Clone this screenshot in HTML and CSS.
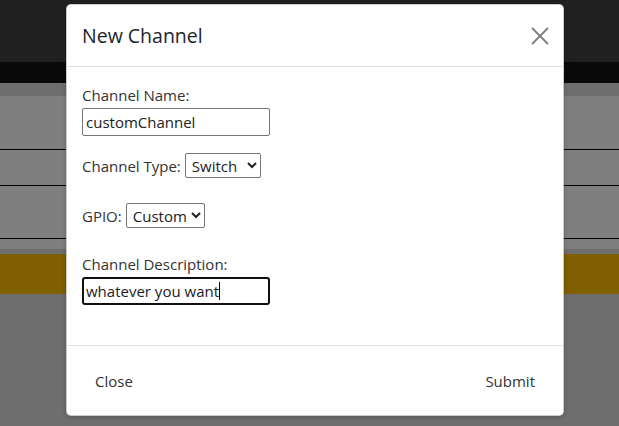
FILE: index.html
```html
<!DOCTYPE html>
<html>
<head>
<meta charset="utf-8">
<link rel="stylesheet" href="styles.css">
</head>
<body>
<div class="page">
  <div class="topbar"></div>
  <div class="navbar"></div>
  <div class="content">
    <div class="table">
      <div class="row r1"></div>
      <div class="row r2"></div>
      <div class="row r3"></div>
      <div class="row r4"></div>
    </div>
    <div class="alert"></div>
  </div>
</div>

<div class="modal">
  <div class="modal-content">
    <div class="modal-header">
      <h5 class="modal-title">New Channel</h5>
      <button class="close" aria-label="Close">
        <svg width="18" height="18" viewBox="0 0 18 18"><path d="M1 1L17 17M17 1L1 17" stroke="#7d7d7d" stroke-width="1.8" fill="none"/></svg>
      </button>
    </div>
    <div class="modal-body">
      <label class="lbl">Channel Name:</label>
      <input class="txt" type="text" value="customChannel">
      <div class="sel-row type-row">
        <span>Channel Type:</span>
        <select class="sel sel-type"><option>Switch</option></select>
      </div>
      <div class="sel-row gpio-row">
        <span>GPIO:</span>
        <select class="sel sel-gpio"><option>Custom</option></select>
      </div>
      <label class="lbl desc-lbl">Channel Description:</label>
      <span class="field-wrap">
        <input class="txt focused" type="text" value="whatever you want">
        <span class="caret"></span>
      </span>
    </div>
    <div class="modal-footer">
      <button class="btn">Close</button>
      <button class="btn">Submit</button>
    </div>
  </div>
</div>
</body>
</html>
```
FILE: styles.css
```css
* { box-sizing: border-box; }
html, body { margin: 0; padding: 0; }
body {
  width: 619px;
  height: 426px;
  overflow: hidden;
  position: relative;
  background: #6e6e6e;
  font-family: "Open Sans", "Noto Sans", sans-serif;
  font-size: 15px;
  color: #212529;
}
.topbar { height: 62px; background: #202020; }
.navbar { height: 21px; background: #0a0a0a; }
.content { padding-top: 13px; }
.table { background: #7f7f7f; }
.row { border-bottom: 1px solid #000; }
.r1 { height: 54px; }
.r2 { height: 36px; }
.r3 { height: 53px; }
.r4 { height: 10px; border-bottom: none; }
.alert { margin-top: 5px; height: 40px; background: #7f5f00; }

.modal {
  position: absolute;
  left: 66px;
  top: 4px;
  width: 498px;
}
.modal-content {
  background: #fff;
  border: 1px solid rgba(0,0,0,0.2);
  border-radius: 5px;
  box-shadow: 0 1px 4px rgba(0,0,0,0.25);
  display: flex;
  flex-direction: column;
}
.modal-header {
  height: 62px;
  padding: 16px 15px 16px 15px;
  border-bottom: 1px solid #e0dfe7;
  display: flex;
  align-items: center;
  justify-content: space-between;
}
.modal-title {
  margin: 0;
  font-size: 19.5px;
  font-weight: 500;
  line-height: 30px;
  color: #212529;
}
.close {
  border: none;
  background: none;
  padding: 0;
  margin-right: -1px;
  width: 18px;
  height: 18px;
  display: flex;
}
.modal-body {
  padding: 16px 15px 40px 15px;
  display: flex;
  flex-direction: column;
  align-items: flex-start;
  color: #333;
}
.lbl { line-height: 24px; display: block; }
.txt {
  width: 188px;
  height: 28px;
  margin-top: 1px;
  border: 1px solid #767676;
  border-radius: 2px;
  padding: 0 3px;
  font-family: inherit;
  font-size: 15px;
  color: #212121;
  background: #fff;
}
.sel-row {
  display: flex;
  align-items: center;
  gap: 4px;
  height: 25px;
}
.type-row { margin-top: 17px; }
.gpio-row { margin-top: 25px; }
.sel {
  height: 25px;
  border: 1px solid #767676;
  border-radius: 2px;
  font-family: inherit;
  font-size: 15px;
  color: #212121;
  background: #fff;
  padding: 0 0 0 2px;
}
.sel-type { width: 76px; }
.sel-gpio { width: 79px; }
.desc-lbl { margin-top: 24px; }
.field-wrap { position: relative; display: block; margin-top: 0; }
.focused {
  border: 2px solid #101010;
  border-radius: 3px;
  padding: 0 2px;
  outline: none;
}
.caret {
  position: absolute;
  left: 137px;
  top: 6px;
  width: 1px;
  height: 18px;
  background: #000;
}
.modal-footer {
  padding: 12px 12px 11px 12px;
  border-top: 1px solid #dee2e6;
  display: flex;
  justify-content: space-between;
}
.btn {
  margin: 4px;
  padding: 7px 12px;
  height: 38px;
  border: none;
  background: none;
  font-family: inherit;
  font-size: 15px;
  color: #333;
  line-height: 24px;
}
```
